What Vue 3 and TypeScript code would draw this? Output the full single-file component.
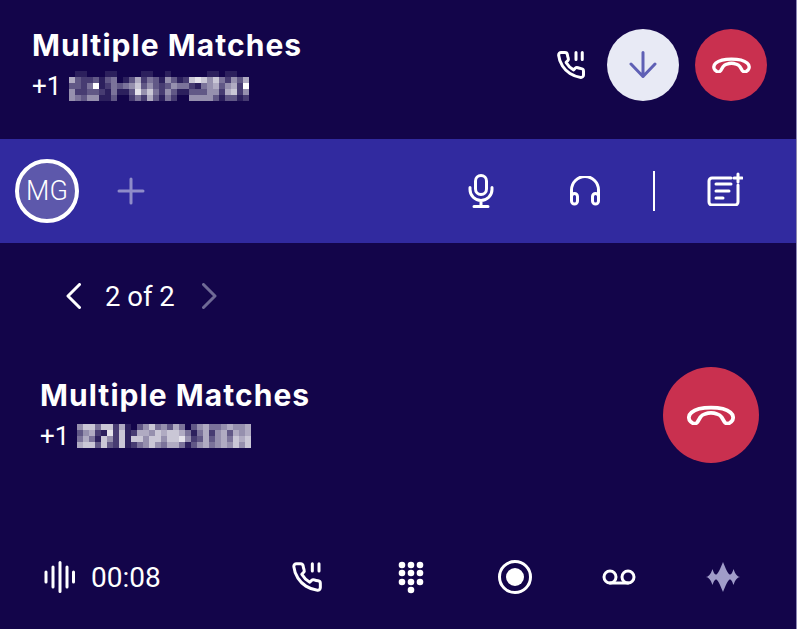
<script setup lang="ts">
// each digit is one mosaic cell's brightness, 0 = background, 9 = white
const topNumber = [
  '011000110000110010000001101100',
  '632231340136243153127875742536',
  '332491243457353235442145635629',
  '522332141138574253113335526725',
  '543551130024263142005555313312',
]
const matchNumber = [
  '57747726103574536403564456556',
  '35621827126657677641462563656',
  '46417527177577577852363564767',
  '67737327124575466413564565757',
]

const cell = 6
const toCells = (rows: string[]) =>
  rows.flatMap((row, y) =>
    row.split('').map((v, x) => ({ key: `${x}-${y}`, x: x * cell, y: y * cell, o: Number(v) / 9 })),
  )
const topCells = toCells(topNumber)
const matchCells = toCells(matchNumber)

const handset =
  'M22 16.92v3a2 2 0 0 1-2.18 2 19.79 19.79 0 0 1-8.63-3.07 19.5 19.5 0 0 1-6-6 19.79 19.79 0 0 1-3.07-8.67A2 2 0 0 1 4.11 2h3a2 2 0 0 1 2 1.72 12.84 12.84 0 0 0 .7 2.81 2 2 0 0 1-.45 2.11L8.09 9.91a16 16 0 0 0 6 6l1.27-1.27a2 2 0 0 1 2.11-.45 12.84 12.84 0 0 0 2.81.7A2 2 0 0 1 22 16.92z'
const hangup =
  'M3.500 16.500C1 14 1.500 10 4.500 7.500 12 1 36 1 43.500 7.500 46.500 10 47 14 44.500 16.500L42.500 18C41 19 38.500 18.500 37.500 17L34.500 12C33.500 10.500 32 9.500 30 9 26 7.500 22 7.500 18 9 16 9.500 14.500 10.500 13.500 12L10.500 17C9.500 18.500 7 19 5.500 18Z'
const dialDots = [
  [4, 4], [13, 4], [22, 4],
  [4, 12], [13, 12], [22, 12],
  [4, 21], [13, 21], [22, 21],
  [13, 29],
]
</script>

<template>
  <div class="screen">
    <header class="incoming">
      <div class="caller">
        <div class="name">Multiple Matches</div>
        <div class="number">
          <span>+1</span>
          <svg class="mosaic" width="180" height="30" viewBox="0 0 180 30" aria-hidden="true">
            <rect v-for="c in topCells" :key="c.key" :x="c.x" :y="c.y" width="6" height="6" fill="#fff" :fill-opacity="c.o" />
          </svg>
        </div>
      </div>
      <div class="incoming-actions">
        <svg class="hold" width="30" height="30" viewBox="0 0 24 24" fill="none" stroke="#fff" stroke-width="2.400" stroke-linecap="round" stroke-linejoin="round">
          <path :d="handset" />
          <path d="M16 2v5.500M21 2v5.500" />
        </svg>
        <button class="round light">
          <svg width="28" height="28" viewBox="0 0 28 28" fill="none" stroke="#5f60b5" stroke-width="3" stroke-linecap="round" stroke-linejoin="round">
            <path d="M14 1.500v24M2 13l12 12.500 12-12.500" />
          </svg>
        </button>
        <button class="round red">
          <svg width="39" height="16" viewBox="0 0 48 20" fill="none" stroke="#fff" stroke-width="4.200" stroke-linejoin="round">
            <path :d="hangup" />
          </svg>
        </button>
      </div>
    </header>

    <section class="band">
      <div class="avatar">MG</div>
      <svg class="plus" width="28" height="28" viewBox="0 0 28 28" stroke="#8f8cc9" stroke-width="3" stroke-linecap="round">
        <path d="M14 2v24M2 14h24" />
      </svg>
      <div class="band-tools">
        <svg class="mic" width="26" height="34" viewBox="0 0 26 34" fill="none" stroke="#fff" stroke-width="3" stroke-linecap="round">
          <rect x="7.500" y="1.500" width="11" height="19" rx="5.500" />
          <path d="M2 13.500v2a11 11 0 0 0 22 0v-2M13 26.500v5.500M6 32.500h14" />
        </svg>
        <svg class="headset" width="32" height="30" viewBox="0 0 32 30" fill="none" stroke="#fff" stroke-width="3" stroke-linecap="round">
          <path d="M2.500 21v-7a13.500 13.500 0 0 1 27 0v7" />
          <rect x="2.500" y="17.500" width="6" height="10.500" rx="3" />
          <rect x="23.500" y="17.500" width="6" height="10.500" rx="3" />
        </svg>
        <span class="divider"></span>
        <svg class="note" width="36" height="34" viewBox="0 0 36 34" fill="none" stroke="#fff" stroke-width="3" stroke-linecap="round" stroke-linejoin="round">
          <path d="M24 6H5a3 3 0 0 0-3 3v21a3 3 0 0 0 3 3h23a3 3 0 0 0 3-3V13" />
          <path d="M9 12h15M9 19h13M9 26h7" />
          <path d="M31 2v8M27 6h8" />
        </svg>
      </div>
    </section>

    <nav class="pager">
      <svg width="15" height="26" viewBox="0 0 15 26" fill="none" stroke="#fff" stroke-width="3" stroke-linecap="round" stroke-linejoin="round">
        <path d="M13.500 1.500L2 13l11.500 11.500" />
      </svg>
      <span>2 of 2</span>
      <svg width="15" height="26" viewBox="0 0 15 26" fill="none" stroke="#6f6a96" stroke-width="3" stroke-linecap="round" stroke-linejoin="round">
        <path d="M1.500 1.500L13 13 1.500 24.500" />
      </svg>
    </nav>

    <section class="match">
      <div class="caller">
        <div class="name">Multiple Matches</div>
        <div class="number">
          <span>+1</span>
          <svg class="mosaic" width="174" height="24" viewBox="0 0 174 24" aria-hidden="true">
            <rect v-for="c in matchCells" :key="c.key" :x="c.x" :y="c.y" width="6" height="6" fill="#fff" :fill-opacity="c.o" />
          </svg>
        </div>
      </div>
      <button class="round red big">
        <svg width="48" height="20" viewBox="0 0 48 20" fill="none" stroke="#fff" stroke-width="3.800" stroke-linejoin="round">
          <path :d="hangup" />
        </svg>
      </button>
    </section>

    <footer class="controls">
      <div class="timer">
        <svg width="32" height="32" viewBox="0 0 32 32" fill="none" stroke="#fff" stroke-width="3" stroke-linecap="round">
          <path d="M2 11v10M9 6v20M16 1.500v29M23 6v20M29.500 11v10" />
        </svg>
        <span>00:08</span>
      </div>
      <div class="control-icons">
        <div class="slot">
          <svg width="32" height="32" viewBox="0 0 24 24" fill="none" stroke="#fff" stroke-width="2.250" stroke-linecap="round" stroke-linejoin="round">
            <path :d="handset" />
            <path d="M16 2v5.500M21 2v5.500" />
          </svg>
        </div>
        <div class="slot">
          <svg width="26" height="33" viewBox="0 0 26 33" fill="#fff">
            <circle v-for="d in dialDots" :key="d.join()" :cx="d[0]" :cy="d[1]" r="3.300" />
          </svg>
        </div>
        <div class="slot">
          <svg width="36" height="36" viewBox="0 0 36 36" fill="none">
            <circle cx="18" cy="18" r="15.500" stroke="#fff" stroke-width="3" />
            <circle cx="18" cy="18" r="9" fill="#fff" />
          </svg>
        </div>
        <div class="slot">
          <svg width="34" height="16" viewBox="0 0 34 16" fill="none" stroke="#fff" stroke-width="3" stroke-linecap="round">
            <circle cx="8" cy="8" r="6" />
            <circle cx="26" cy="8" r="6" />
            <path d="M8 14h18" />
          </svg>
        </div>
        <div class="slot">
          <svg width="34" height="32" viewBox="0 0 34 32" fill="#a09cc9">
            <path d="M0 16C2.500 15.500 4.500 14 6.500 8 8 13 9.500 14 10.500 13.500 12.500 12 14.500 7 17 1 19.500 7 21.500 12 23.500 13.500 24.500 14 26 13 27.500 8 29.500 14 31.500 15.500 34 16 31.500 16.500 29.500 18 27.500 24 26 19 24.500 18 23.500 18.500 21.500 20 19.500 25 17 31 14.500 25 12.500 20 10.500 18.500 9.500 18 8 19 6.500 24 4.500 18 2.500 16.500 0 16Z" />
          </svg>
        </div>
      </div>
    </footer>
  </div>
</template>

<style scoped>
.screen {
  box-sizing: border-box;
  width: 797px;
  height: 629px;
  overflow: hidden;
  display: flex;
  flex-direction: column;
  background: #13054a;
  border-right: 1px solid #8d88b5;
  color: #fff;
  font-family: Roboto, "Liberation Sans", sans-serif;
}

.incoming {
  box-sizing: border-box;
  height: 139px;
  padding: 0 29px 9px 32px;
  display: flex;
  align-items: center;
  justify-content: space-between;
}
.incoming-actions { display: flex; align-items: center; gap: 16px; }
.hold { margin-right: 5px; }

.name {
  margin-top: -2px;
  font-family: Inter, "Liberation Sans", sans-serif;
  font-size: 30px;
  font-weight: 700;
  line-height: 36px;
  letter-spacing: 1.05px;
}
.number {
  height: 30px;
  margin-top: 8px;
  display: flex;
  align-items: center;
  gap: 8px;
  font-size: 26px;
  line-height: 30px;
}
.mosaic { display: block; filter: blur(0.4px); }

.round {
  width: 72px;
  height: 72px;
  padding: 0;
  border: 0;
  border-radius: 50%;
  display: flex;
  align-items: center;
  justify-content: center;
}
.light { background: #e8eaf5; }
.red { background: #c9304f; }
.big { width: 96px; height: 96px; }

.band {
  box-sizing: border-box;
  height: 104px;
  padding-left: 15px;
  display: flex;
  align-items: center;
  background: #312a9f;
}
.avatar {
  box-sizing: border-box;
  width: 64px;
  height: 64px;
  border: 4px solid #fff;
  border-radius: 50%;
  background: #5d58ab;
  display: flex;
  align-items: center;
  justify-content: center;
  font-size: 27px;
  font-weight: 300;
}
.plus { margin-left: 38px; }
.band-tools {
  margin-left: 323px;
  display: flex;
  align-items: center;
}
.headset { margin-left: 75px; }
.divider {
  width: 2px;
  height: 40px;
  margin-left: 52px;
  background: #fff;
}
.note { margin: -4px 0 0 52px; }

.pager {
  height: 40px;
  margin-top: 33px;
  padding-left: 66px;
  display: flex;
  align-items: center;
  gap: 24px;
  font-size: 27.5px;
}
.pager span { margin-right: 3px; }

.match {
  height: 96px;
  margin-top: 51px;
  padding: 0 37px 0 40px;
  display: flex;
  align-items: center;
  justify-content: space-between;
}

.controls {
  height: 48px;
  margin-top: 90px;
  padding: 0 21px 0 44px;
  display: flex;
  align-items: center;
  justify-content: space-between;
}
.timer {
  display: flex;
  align-items: center;
  gap: 15px;
  font-size: 28px;
}
.control-icons { display: flex; }
.slot {
  width: 104px;
  display: flex;
  align-items: center;
  justify-content: center;
}
.slot svg { display: block; }
</style>

<style>
html, body { background: #fff; }
</style>
